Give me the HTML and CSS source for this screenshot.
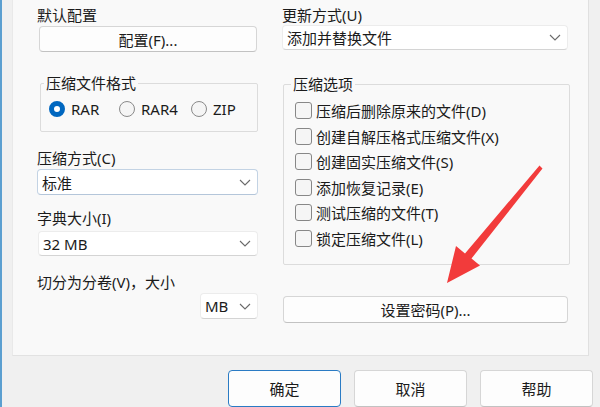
FILE: index.html
```html
<!DOCTYPE html>
<html lang="zh-CN">
<head>
<meta charset="utf-8">
<title>压缩文件名和参数</title>
<link rel="stylesheet" href="styles.css">
</head>
<body>
<div class="window">
  <div class="panel">
    <div class="col col-left">
      <div class="label first">默认配置</div>
      <div class="btn btn-profile">配置(F)...</div>
      <fieldset class="group group-format">
        <legend>压缩文件格式</legend>
        <div class="radios">
          <div class="radio-item"><span class="radio checked"></span><span>RAR</span></div>
          <div class="radio-item"><span class="radio"></span><span>RAR4</span></div>
          <div class="radio-item"><span class="radio"></span><span>ZIP</span></div>
        </div>
      </fieldset>
      <div class="label l-method">压缩方式(C)</div>
      <div class="select select-focus s-method"><span>标准</span><svg class="chev" width="12" height="7" viewBox="0 0 12 7"><polyline points="1,1 6,6 11,1"/></svg></div>
      <div class="label l-dict">字典大小(I)</div>
      <div class="select s-dict"><span>32 MB</span><svg class="chev" width="12" height="7" viewBox="0 0 12 7"><polyline points="1,1 6,6 11,1"/></svg></div>
      <div class="label l-split">切分为分卷(V)，大小</div>
      <div class="select s-unit"><span>MB</span><svg class="chev" width="12" height="7" viewBox="0 0 12 7"><polyline points="1,1 6,6 11,1"/></svg></div>
    </div>
    <div class="col col-right">
      <div class="label first">更新方式(U)</div>
      <div class="select s-update"><span>添加并替换文件</span><svg class="chev" width="12" height="7" viewBox="0 0 12 7"><polyline points="1,1 6,6 11,1"/></svg></div>
      <fieldset class="group group-options">
        <legend>压缩选项</legend>
        <div class="checks">
          <div class="check-row"><span class="checkbox"></span><span>压缩后删除原来的文件(D)</span></div>
          <div class="check-row"><span class="checkbox"></span><span>创建自解压格式压缩文件(X)</span></div>
          <div class="check-row"><span class="checkbox"></span><span>创建固实压缩文件(S)</span></div>
          <div class="check-row"><span class="checkbox"></span><span>添加恢复记录(E)</span></div>
          <div class="check-row"><span class="checkbox"></span><span>测试压缩的文件(T)</span></div>
          <div class="check-row"><span class="checkbox"></span><span>锁定压缩文件(L)</span></div>
        </div>
      </fieldset>
      <div class="btn btn-password">设置密码(P)...</div>
    </div>
  </div>
  <div class="footer">
    <div class="btn btn-footer btn-default">确定</div>
    <div class="btn btn-footer">取消</div>
    <div class="btn btn-footer">帮助</div>
  </div>
  <svg class="annotation" width="600" height="407" viewBox="0 0 600 407">
    <polygon points="539.5,165.5 542.5,168.5 471.5,258.5 480,265.5 447,283 456,246 465,253.5"/>
  </svg>
</div>
</body>
</html>
```

FILE: styles.css
```css
* { box-sizing: border-box; }

html, body {
  margin: 0;
  padding: 0;
  width: 600px;
  height: 407px;
  overflow: hidden;
  background: #f0f0f0;
}

body {
  font-family: "Noto Sans", "Noto Sans CJK SC", sans-serif;
  font-size: 15px;
  color: #1b1b1b;
}

.window {
  position: relative;
  width: 600px;
  height: 407px;
  border-left: 2px solid #5b9fd0;
  padding-left: 10px;
  background: #f0f0f0;
}

.panel {
  width: 577px;
  height: 356px;
  background: #f9f9f9;
  border-left: 1px solid #e9e9e9;
  border-right: 1px solid #e0e0e0;
  border-bottom: 1px solid #e2e2e2;
  padding: 5px 0 0 24px;
  display: flex;
  gap: 24px;
}

.col {
  display: flex;
  flex-direction: column;
}

.col-left { width: 221px; }
.col-right { width: 288px; }

.label {
  line-height: 20px;
  height: 20px;
  white-space: nowrap;
}

.btn {
  background: #fdfdfd;
  border: 1px solid #d6d6d6;
  border-bottom-color: #c2c2c2;
  border-radius: 4px;
  display: flex;
  align-items: center;
  justify-content: center;
  white-space: nowrap;
}

.btn-profile {
  margin-top: 1px;
  height: 26px;
  margin-left: 2px;
  margin-right: 1px;
}

.group {
  margin: 0;
  min-width: 0;
  border: 1px solid #dcdcdc;
  border-radius: 2px;
}

.group legend {
  line-height: 18px;
  padding: 0 2px;
}

.group-format {
  margin-top: 22px;
  padding: 0 8px 12px 8px;
  margin-left: 3px;
}

.group-format legend { margin-left: -5px; }

.radios {
  margin-top: 7px;
  display: grid;
  grid-template-columns: 70px 72px auto;
  height: 20px;
}

.radio-item {
  display: flex;
  align-items: center;
  gap: 6px;
  line-height: 20px;
}

.radio {
  width: 16px;
  height: 16px;
  border-radius: 50%;
  border: 1px solid #8a8a8a;
  background: #f5f5f5;
  flex: none;
}

.radio.checked {
  border: 5px solid #0067c0;
  background: #ffffff;
}

.select {
  background: #ffffff;
  border: 1px solid #ececec;
  border-bottom-color: #d4d4d4;
  border-radius: 4px;
  display: flex;
  align-items: center;
  justify-content: space-between;
  padding: 0 6px 0 4px;
  white-space: nowrap;
}

.select-focus {
  border-color: #c3d3e4;
  border-bottom-color: #b4c6da;
}

.chev {
  flex: none;
  fill: none;
  stroke: #6a6a6a;
  stroke-width: 1.1;
}

.l-method { margin-top: 16px; }
.s-method { margin-top: 1px; height: 26px; }
.l-dict { margin-top: 13px; }
.s-dict { margin-top: 3px; height: 25px; margin-left: 1px; }
.l-split { margin-top: 16px; }
.s-unit {
  margin-top: 1px;
  height: 26px;
  width: 58px;
  align-self: flex-end;
}

.s-update {
  height: 25px;
  margin-right: 2px;
}

.group-options {
  margin-top: 25px;
  margin-left: 1px;
  padding: 0 8px 11px 11px;
  height: 190px;
}

.group-options legend { margin-left: -4px; }

.checks {
  margin-top: 5px;
  display: flex;
  flex-direction: column;
}

.check-row {
  height: 25.5px;
  display: flex;
  align-items: center;
  gap: 4px;
  white-space: nowrap;
}

.checkbox {
  width: 17px;
  height: 17px;
  border: 1px solid #878787;
  border-radius: 3px;
  background: #f5f5f5;
  flex: none;
}

.btn-password {
  margin-top: 31px;
  height: 27px;
  margin-left: 1px;
  margin-right: 2px;
}

.footer {
  display: flex;
  justify-content: flex-end;
  gap: 13px;
  margin-top: 14px;
  padding-right: 7px;
}

.btn-footer {
  width: 113px;
  height: 37px;
}

.btn-default {
  border: 1px solid #2a7bc4;
}

.annotation {
  position: absolute;
  left: -2px;
  top: 0;
  pointer-events: none;
}

.annotation polygon {
  fill: #f23b3b;
}
```
